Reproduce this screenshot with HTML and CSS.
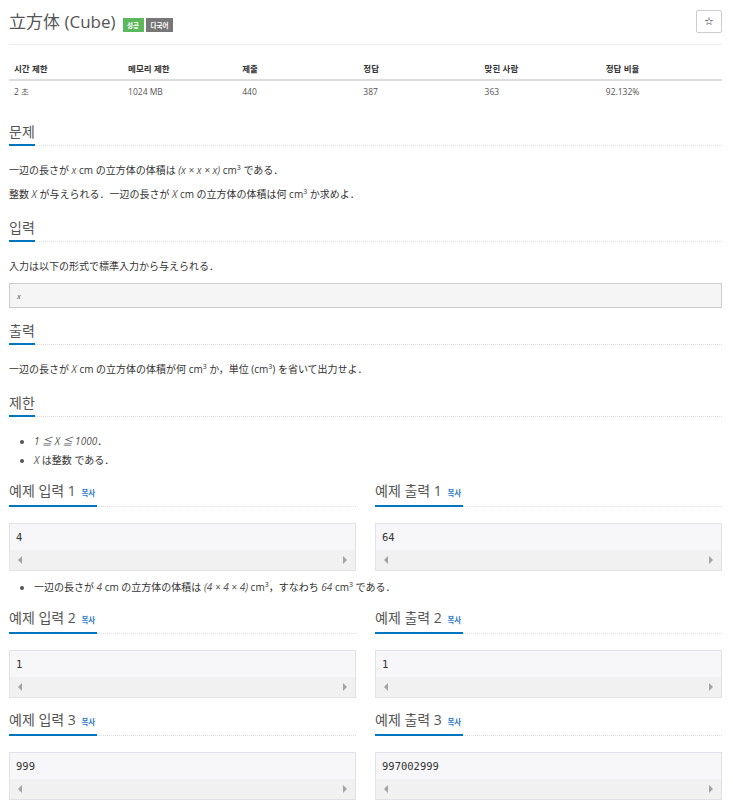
FILE: index.html
```html
<!DOCTYPE html>
<html lang="ko">
<head>
<meta charset="utf-8">
<title>立方体 (Cube)</title>
<link rel="stylesheet" href="styles.css">
</head>
<body>
<div class="container">
  <div class="page-header">
    <h1 class="title"><span class="title-text">立方体 (Cube)</span><span class="badge badge-success">성공</span><span class="badge badge-multi">다국어</span></h1>
    <button class="star" type="button">☆</button>
  </div>

  <table class="info">
    <thead>
      <tr><th class="w16">시간 제한</th><th class="w16">메모리 제한</th><th>제출</th><th>정답</th><th>맞힌 사람</th><th>정답 비율</th></tr>
    </thead>
    <tbody>
      <tr><td>2 초</td><td>1024 MB</td><td>440</td><td>387</td><td>363</td><td>92.132%</td></tr>
    </tbody>
  </table>

  <section class="section">
    <div class="headline"><h2>문제</h2></div>
    <p class="ja">一辺の長さが <span class="m">x</span> cm の立方体の体積は <span class="m">(x × x × x)</span> cm<sup>3</sup> である．</p>
    <p class="ja">整数 <span class="m">X</span> が与えられる．一辺の長さが <span class="m">X</span> cm の立方体の体積は何 cm<sup>3</sup> か求めよ．</p>
  </section>

  <section class="section">
    <div class="headline"><h2>입력</h2></div>
    <p class="ja">入力は以下の形式で標準入力から与えられる．</p>
    <pre class="format">x</pre>
  </section>

  <section class="section">
    <div class="headline"><h2>출력</h2></div>
    <p class="ja">一辺の長さが <span class="m">X</span> cm の立方体の体積が何 cm<sup>3</sup> か，単位 (cm<sup>3</sup>) を省いて出力せよ．</p>
  </section>

  <section class="section">
    <div class="headline"><h2>제한</h2></div>
    <ul class="list ja">
      <li><span class="m">1 ≦ X ≦ 1000</span>．</li>
      <li><span class="m">X</span> は整数 である．</li>
    </ul>
  </section>

  <div class="sample-row">
    <div class="sample-col">
      <div class="headline"><h2>예제 입력 1 <a class="copy">복사</a></h2></div>
      <div class="sample"><pre class="sample-data">4</pre><div class="scrollbar"><span class="arrow-left"></span><span class="arrow-right"></span></div></div>
    </div>
    <div class="sample-col">
      <div class="headline"><h2>예제 출력 1 <a class="copy">복사</a></h2></div>
      <div class="sample"><pre class="sample-data">64</pre><div class="scrollbar"><span class="arrow-left"></span><span class="arrow-right"></span></div></div>
    </div>
  </div>
  <ul class="list note ja">
    <li>一辺の長さが <span class="m">4</span> cm の立方体の体積は <span class="m">(4 × 4 × 4)</span> cm<sup>3</sup>，すなわち <span class="m">64</span> cm<sup>3</sup> である．</li>
  </ul>

  <div class="sample-row">
    <div class="sample-col">
      <div class="headline"><h2>예제 입력 2 <a class="copy">복사</a></h2></div>
      <div class="sample"><pre class="sample-data">1</pre><div class="scrollbar"><span class="arrow-left"></span><span class="arrow-right"></span></div></div>
    </div>
    <div class="sample-col">
      <div class="headline"><h2>예제 출력 2 <a class="copy">복사</a></h2></div>
      <div class="sample"><pre class="sample-data">1</pre><div class="scrollbar"><span class="arrow-left"></span><span class="arrow-right"></span></div></div>
    </div>
  </div>

  <div class="sample-row">
    <div class="sample-col">
      <div class="headline"><h2>예제 입력 3 <a class="copy">복사</a></h2></div>
      <div class="sample"><pre class="sample-data">999</pre><div class="scrollbar"><span class="arrow-left"></span><span class="arrow-right"></span></div></div>
    </div>
    <div class="sample-col">
      <div class="headline"><h2>예제 출력 3 <a class="copy">복사</a></h2></div>
      <div class="sample"><pre class="sample-data">997002999</pre><div class="scrollbar"><span class="arrow-left"></span><span class="arrow-right"></span></div></div>
    </div>
  </div>
</div>
</body>
</html>
```

FILE: styles.css
```css
html, body {
  margin: 0;
  padding: 0;
  background: #fff;
}

body {
  font-family: "Open Sans", "Noto Sans CJK KR", sans-serif;
  color: #333;
}

.container {
  padding: 0 11px 0 9px;
}

/* Header */
.page-header {
  display: flex;
  justify-content: space-between;
  align-items: flex-start;
  padding: 10px 0 10px;
  border-bottom: 1px solid #eee;
}

.title {
  margin: 0;
  display: flex;
  align-items: flex-end;
  font-size: 17px;
  line-height: 24px;
  font-weight: normal;
  color: #555;
  font-family: "Open Sans", "Noto Sans CJK JP", sans-serif;
}

.badge {
  font-family: "Noto Sans CJK KR", sans-serif;
  font-size: 6.5px;
  font-weight: bold;
  color: #fff;
  line-height: 14px;
  padding: 0 4.5px;
  margin-bottom: 2px;
}

.badge-success {
  background: #5cb85c;
  margin-left: 7px;
}

.badge-multi {
  background: #777;
  margin-left: 2px;
  padding: 0 5px;
}

.star {
  width: 26px;
  height: 23px;
  padding: 0;
  border: 1px solid #ccc;
  border-radius: 2px;
  background: #fff;
  color: #222;
  font-family: "DejaVu Sans", sans-serif;
  font-size: 11px;
  font-weight: bold;
  line-height: 21px;
}

/* Info table */
.info {
  width: 100%;
  border-collapse: collapse;
  margin-top: 12px;
  margin-bottom: 19px;
  font-size: 8.5px;
}

.info th {
  width: 17%;
  text-align: left;
  font-weight: bold;
  padding: 5px;
  line-height: 12px;
  border-bottom: 2px solid #ddd;
  color: #333;
  font-family: "Noto Sans CJK KR", sans-serif;
}

.info th.w16 {
  width: 16%;
}

.info td {
  padding: 5px;
  line-height: 12px;
  color: #555;
}

/* Sections */
.section + .section {
  padding-top: 7px;
}

.headline {
  display: flex;
  align-items: flex-start;
  border-bottom: 1px dotted #ddd;
  margin-bottom: 17px;
}

.headline h2 {
  margin: 0 0 -1px;
  padding: 0 0 2px;
  font-size: 14px;
  line-height: 20px;
  font-weight: normal;
  color: #555;
  border-bottom: 2px solid #0076c0;
  font-family: "Open Sans", "Noto Sans CJK KR", sans-serif;
}

.copy {
  font-size: 7.5px;
  font-weight: bold;
  color: #2a7ac7;
  margin-left: 2px;
  font-family: "Noto Sans CJK KR", sans-serif;
}

.ja {
  font-family: "Open Sans", "Noto Sans CJK JP", sans-serif;
  font-size: 10px;
  color: #333;
}

.section p {
  margin: 0 0 10px;
  line-height: 14px;
}

.m {
  font-style: italic;
  font-size: 10px;
  color: #555;
}

sup {
  font-size: 7px;
  line-height: 0;
  vertical-align: 4px;
}

.format {
  margin: 0 0 6px;
  padding: 0 7px;
  background: #f5f5f5;
  border: 1px solid #ccc;
  font-family: "Open Sans", sans-serif;
  font-style: italic;
  font-size: 8px;
  line-height: 23px;
  color: #555;
}

.list {
  margin: 0;
  padding-left: 25px;
}

.list li {
  line-height: 14px;
  color: #333;
}

.list li + li {
  margin-top: 5px;
}

.list li::marker {
  color: #555;
}

/* Samples */
.sample-row {
  display: grid;
  grid-template-columns: 1fr 1fr;
  column-gap: 19px;
  margin-top: 12px;
}

.section + .sample-row,
.note + .sample-row {
  margin-top: 14px;
}

.sample-row .headline {
  margin-bottom: 16px;
}

.sample-row .headline h2 {
  padding-right: 2px;
}

.sample {
  border: 1px solid #e1e1e8;
  background: #f7f7f9;
}

.sample-data {
  margin: 0;
  padding: 6px 6px;
  font-family: "DejaVu Sans Mono", monospace;
  font-size: 10.5px;
  line-height: 14px;
  color: #333;
}

.scrollbar {
  height: 20px;
  background: #f1f1f1;
  display: flex;
  justify-content: space-between;
  align-items: center;
  padding: 0 8px;
}

.arrow-left {
  width: 0;
  height: 0;
  border-top: 4px solid transparent;
  border-bottom: 4px solid transparent;
  border-right: 4px solid #a3a3a3;
}

.arrow-right {
  width: 0;
  height: 0;
  border-top: 4px solid transparent;
  border-bottom: 4px solid transparent;
  border-left: 4px solid #a3a3a3;
}

.note {
  margin: 9px 0 0;
}
```
